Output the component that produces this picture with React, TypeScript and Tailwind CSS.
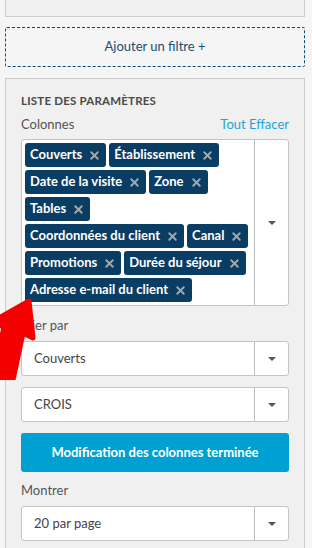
import { X } from 'lucide-react';

const chipRows = [
    ['Couverts', 'Établissement'],
    ['Date de la visite', 'Zone'],
    ['Tables'],
    ['Coordonnées du client', 'Canal'],
    ['Promotions', 'Durée du séjour'],
    ['Adresse e-mail du client'],
];

function Caret() {
    return (
        <div className="w-[34px] flex items-center justify-center border-l border-[#bdbdbd]">
            <svg width="8" height="4" viewBox="0 0 8 4">
                <path d="M0 0 L8 0 L4 4 Z" fill="#555" />
            </svg>
        </div>
    );
}

function Select({ value }: { value: string }) {
    return (
        <div className="flex h-[35px] bg-white border border-[#c4c4c4] rounded-[3px]">
            <div className="flex-1 flex items-center pl-[12px] text-[13px] text-[#444]">{value}</div>
            <Caret />
        </div>
    );
}

export default function App() {
    return (
        <div className="relative min-h-[548px] bg-[#f5f5f5] pl-[5px] pr-[7px] overflow-hidden" style={{ fontFamily: 'Lato, "Liberation Sans", sans-serif' }}>
            <div className="h-[17px] bg-[#f0f0f0] border border-t-0 border-[#cccccc]" />

            <div className="mt-[10px] h-[40px] flex items-center justify-center border border-dashed border-[#0d4a75] rounded-[2px] text-[13px] text-[#1b4d72]">
                Ajouter un filtre +
            </div>

            <div className="mt-[11px] bg-[#f0f0f0] border border-[#cccccc] px-[15px] pt-[15px] pb-[20px]">
                <h2 className="text-[11.5px] font-bold tracking-[0.2px] text-[#4a4a4a] leading-[14px]">LISTE DES PARAMÈTRES</h2>
                <div className="flex justify-between mt-[8px] text-[13px] leading-[16px]">
                    <span className="text-[#555]">Colonnes</span>
                    <span className="text-[#1ea4d9]">Tout Effacer</span>
                </div>

                <div className="mt-[7px] flex h-[167px] bg-white border border-[#c4c4c4] rounded-[3px]">
                    <div className="flex-1 pl-[3px] pt-[3px] flex flex-col gap-[3px]">
                        {chipRows.map((row, i) => (
                            <div key={i} className="flex gap-[3px]">
                                {row.map((label) => (
                                    <div key={label} className="h-[24px] flex items-center gap-[6px] pl-[5px] pr-[5px] bg-[#0a3d63] rounded-[3px] text-[13px] font-bold text-white whitespace-nowrap">
                                        {label}
                                        <X size={13} strokeWidth={3.5} className="text-[#a8a8a8]" />
                                    </div>
                                ))}
                            </div>
                        ))}
                    </div>
                    <Caret />
                </div>

                <div className="mt-[11px] text-[13px] text-[#555] leading-[16px]">Trier par</div>
                <div className="mt-[8px]">
                    <Select value="Couverts" />
                </div>
                <div className="mt-[11px]">
                    <Select value="CROIS" />
                </div>

                <button className="mt-[11px] w-full h-[39px] bg-[#00a0d2] rounded-[3px] text-white text-[13px] font-bold">
                    Modification des colonnes terminée
                </button>

                <div className="mt-[10px] text-[13px] text-[#555] leading-[16px]">Montrer</div>
                <div className="mt-[8px]">
                    <Select value="20 par page" />
                </div>
            </div>

            <svg className="absolute left-0 top-[296px]" width="40" height="84" viewBox="0 0 40 84">
                <path
                    d="M29 5 L33 42 L23 37 L13 84 L-8 84 L4 31 L-8 26 Z"
                    fill="#f40000"
                    stroke="#f40000"
                    strokeWidth="5"
                    strokeLinejoin="round"
                />
            </svg>
        </div>
    );
}
